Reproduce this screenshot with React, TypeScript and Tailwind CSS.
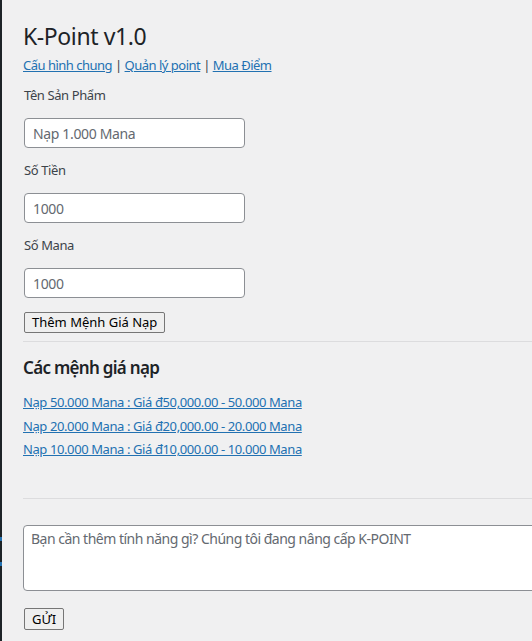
import React from "react";

const font = { fontFamily: '"Noto Sans", "Open Sans", sans-serif' };

function Field({ label, placeholder, value }: { label: string; placeholder?: string; value?: string }) {
  return (
    <div className="flex flex-col">
      <label className="mt-[13px] text-[13px] leading-[19px] text-[#3c434a]">{label}</label>
      <input
        className="mt-[13px] w-[221px] h-[30px] rounded-[4px] border border-[#8c8f94] bg-white px-[8px] text-[14px] tracking-[-0.35px] text-[#646970] placeholder:text-[#646970] outline-none"
        placeholder={placeholder}
        defaultValue={value}
      />
    </div>
  );
}

export default function App() {
  const prices = [
    "Nạp 50.000 Mana : Giá đ50,000.00 - 50.000 Mana",
    "Nạp 20.000 Mana : Giá đ20,000.00 - 20.000 Mana",
    "Nạp 10.000 Mana : Giá đ10,000.00 - 10.000 Mana",
  ];

  return (
    <div className="h-[641px] w-[532px] overflow-hidden bg-[#f0f0f1] flex tracking-[-0.4px]" style={font}>
      <div className="w-[2px] shrink-0 bg-[#1d2327] flex flex-col">
        <div className="h-[537px]" />
        <div className="h-[4px] bg-[#2271b1]" />
        <div className="h-[21px]" />
        <div className="h-[4px] bg-[#2271b1]" />
      </div>
      <div className="flex-1 pl-[21px] pt-[22px]">
        <h1 className="text-[23px] leading-[29px] text-[#1d2327] font-normal">K-Point v1.0</h1>
        <div className="mt-[5px] text-[13px] leading-[19px] text-[#3c434a] tracking-[-0.5px]">
          <a href="#" className="text-[#2271b1] underline">Cấu hình chung</a> |{" "}
          <a href="#" className="text-[#2271b1] underline">Quản lý point</a> |{" "}
          <a href="#" className="text-[#2271b1] underline">Mua Điểm</a>
        </div>

        <div className="flex flex-col pl-[1px] mt-[-2px]">
          <Field label="Tên Sản Phẩm" placeholder="Nạp 1.000 Mana" />
          <Field label="Số Tiền" value="1000" />
          <Field label="Số Mana" value="1000" />
          <div className="mt-[14px] flex">
            <button className="h-[21px] px-[7px] text-[13px] leading-[19px] tracking-normal text-black bg-[#efefef] border border-[#767676] rounded-[2px]">
              Thêm Mệnh Giá Nạp
            </button>
          </div>
        </div>

        <div className="mt-[8px] h-px bg-[#dcdcde] w-[600px]" />

        <h2 className="mt-[15px] text-[17px] leading-[22px] font-semibold text-[#1d2327] tracking-[-0.7px]">Các mệnh giá nạp</h2>
        <div className="mt-[14px] flex flex-col gap-[4.5px]">
          {prices.map((p) => (
            <a key={p} href="#" className="text-[13px] leading-[19px] text-[#2271b1] underline">
              {p}
            </a>
          ))}
        </div>

        <div className="mt-[39px] h-px bg-[#dcdcde] w-[600px]" />

        <textarea
          className="mt-[26px] block w-[560px] h-[66px] rounded-[4px] border border-[#8c8f94] bg-white px-[7px] py-[3px] text-[14px] leading-[20px] tracking-[-0.5px] placeholder:text-[#646970] outline-none resize-none"
          placeholder="Bạn cần thêm tính năng gì? Chúng tôi đang nâng cấp K-POINT"
        />
        <div className="mt-[17px] pl-[1px] flex">
          <button className="h-[22px] px-[7px] text-[13px] leading-[19px] tracking-normal text-black bg-[#efefef] border border-[#767676] rounded-[2px]">
            GỬI
          </button>
        </div>
      </div>
    </div>
  );
}
